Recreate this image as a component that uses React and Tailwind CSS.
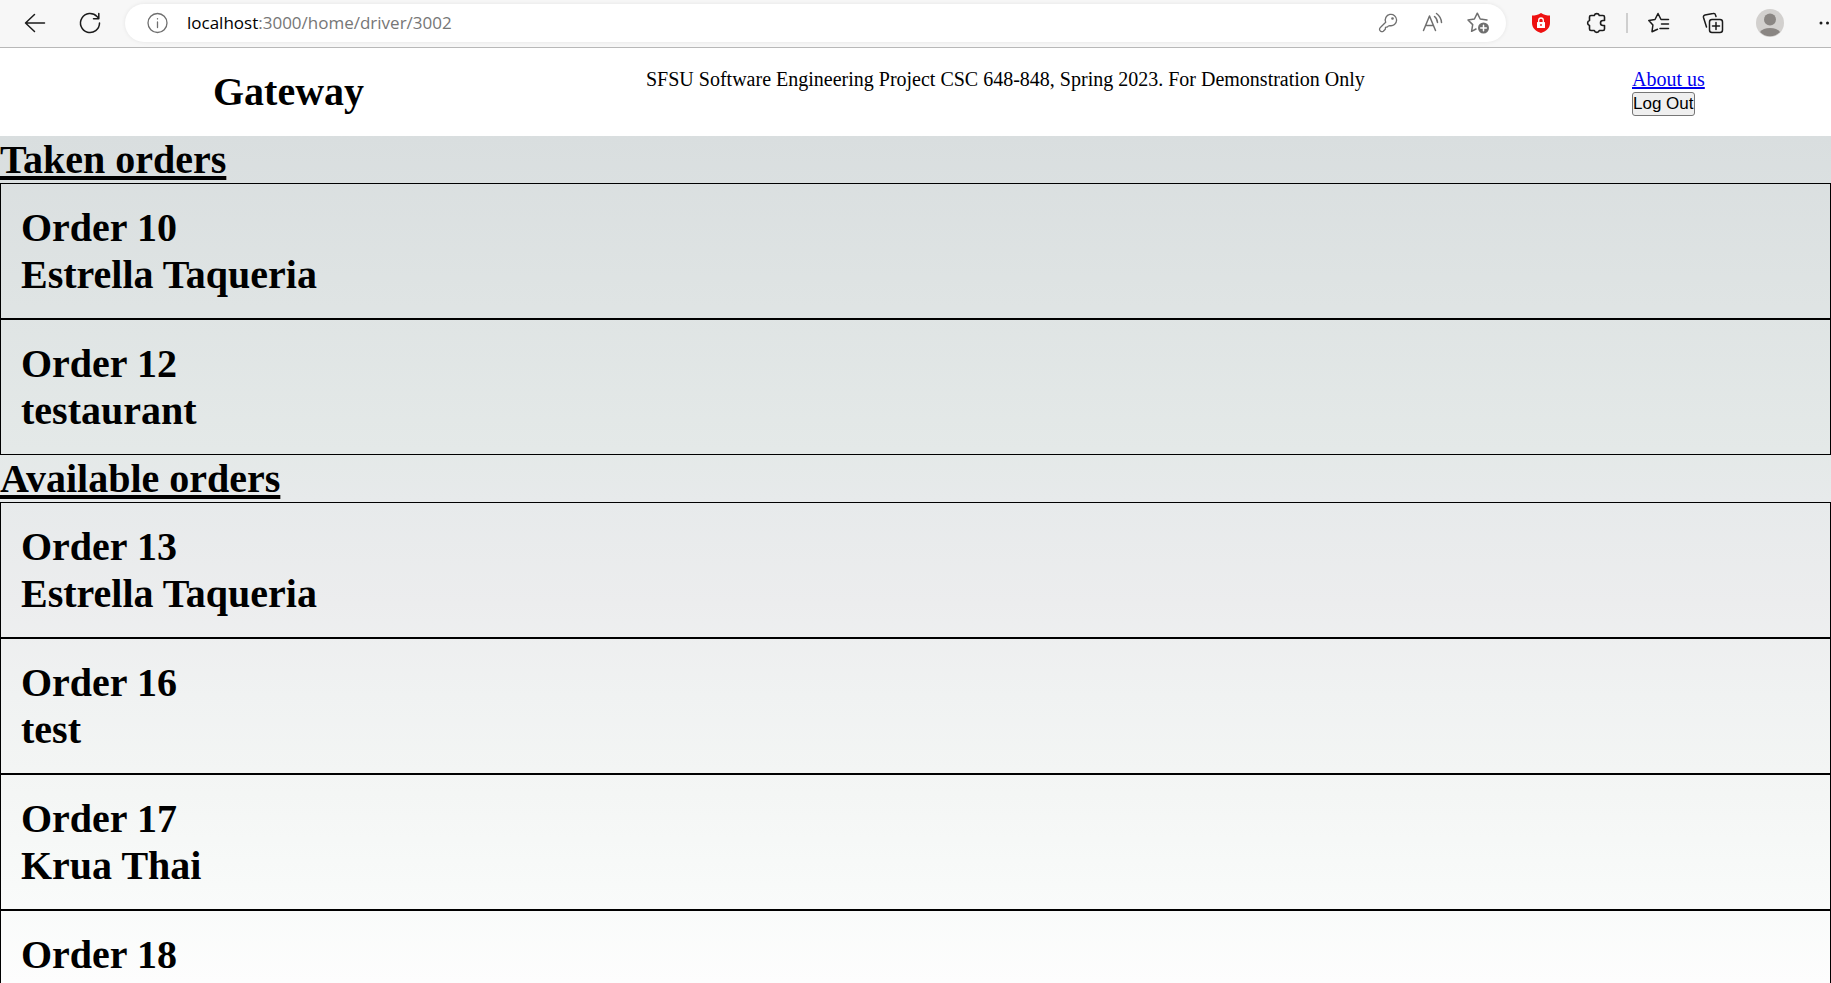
const taken = [
  { id: 10, restaurant: 'Estrella Taqueria' },
  { id: 12, restaurant: 'testaurant' },
];

const available = [
  { id: 13, restaurant: 'Estrella Taqueria' },
  { id: 16, restaurant: 'test' },
  { id: 17, restaurant: 'Krua Thai' },
  { id: 18 },
];

function Icon({ children, weight = 1.3 }) {
  return (
    <svg
      viewBox="0 0 24 24"
      className="size-6 fill-none stroke-current"
      strokeWidth={weight}
      strokeLinecap="round"
      strokeLinejoin="round"
      aria-hidden="true"
    >
      {children}
    </svg>
  );
}

function ToolButton({ label, children, className = '' }) {
  return (
    <button type="button" aria-label={label} className={`flex shrink-0 items-center justify-center ${className}`}>
      {children}
    </button>
  );
}

function BrowserBar() {
  return (
    <div className="flex h-12 shrink-0 items-center overflow-hidden border-b border-[#b8b8b8] bg-[#f7f7f7] pb-px pl-[23px] text-[#1b1b1b]">
      <ToolButton label="Back">
        <Icon weight={1.5}>
          <path d="M21.5 12H2.5M11.5 3.5 2.5 12l9 8.5" />
        </Icon>
      </ToolButton>
      <ToolButton label="Refresh" className="ml-[31px]">
        <Icon weight={1.5}>
          <path d="M21.5 12A9.5 9.5 0 1 1 19 5.6L20.800 7.500M20.800 2.500V7.700H15.500" />
        </Icon>
      </ToolButton>
      <div className="ml-[23px] flex h-[38px] min-w-0 flex-1 items-center rounded-full bg-white pr-4 pl-5 text-[#6f6f6f] shadow-[0_0_4px_rgba(0,0,0,0.08)]">
        <ToolButton label="Site information">
          <Icon>
            <circle cx="12.500" cy="12" r="9.500" />
            <path d="M12.500 11v5.500M12.500 7.600v.3" />
          </Icon>
        </ToolButton>
        <div className="ml-[18px] min-w-0 flex-1 truncate font-['Open_Sans',sans-serif] text-[17px] leading-6 text-[#767676]">
          <span className="text-black">localhost</span>:3000/home/driver/3002
        </div>
        <ToolButton label="Saved passwords">
          <Icon>
            <path d="M9.700 11.300A5.700 5.700 0 1 1 13.700 14.600C12.500 14.600 12 15 11.500 15.800L9.500 16.300 9.300 18.300 7.300 20.300C5.800 21.300 3.500 20.300 3.500 18.300C3.500 17.300 4 16.800 4.600 16.300Z" />
            <circle cx="16.500" cy="7.500" r="0.700" />
          </Icon>
        </ToolButton>
        <ToolButton label="Read aloud" className="ml-[21px]">
          <Icon weight={1.5}>
            <path d="M2.500 19.500 8.500 5 14.500 19.500M4.700 14.500h7.600M13.500 5.500a8 8 0 0 1 3 6M15.500 2.500a12 12 0 0 1 5 9" />
          </Icon>
        </ToolButton>
        <ToolButton label="Add to favorites" className="ml-[21px]">
          <Icon weight={1.5}>
            <path d="M10 18 5.600 20.300 6.700 13.600 2 9 8.400 8 11.300 2.200 14.200 8 21 9" />
            <circle cx="17.500" cy="17" r="5.500" className="fill-[#6f6f6f] stroke-none" />
            <path d="M17.500 14.200v5.600M14.700 17h5.600" className="stroke-white" />
          </Icon>
        </ToolButton>
      </div>
      <ToolButton label="Ad blocker" className="ml-[23px]">
        <Icon>
          <path d="M12 2C9 4 6 4.500 3 4.500V12c0 5 4 8.500 9 10 5-1.500 9-5 9-10V4.500C18 4.500 15 4 12 2Z" className="fill-[#ee1111] stroke-none" />
          <rect x="8" y="11" width="8" height="6" rx="0.500" className="fill-white stroke-none" />
          <path d="M9.700 11V9.300a2.300 2.300 0 0 1 4.600 0V11" className="stroke-white" />
          <circle cx="12" cy="14" r="0.900" className="fill-[#ee1111] stroke-none" />
        </Icon>
      </ToolButton>
      <ToolButton label="Extensions" className="ml-8">
        <Icon weight={1.6}>
          <path d="M6 4.500H9.300A2.600 2.600 0 0 1 14.300 4.500H18A1.500 1.500 0 0 1 19.500 6V9.500H18A2.500 2.500 0 0 0 18 14.500H19.500V18A1.500 1.500 0 0 1 18 19.500H14.300A2.600 2.600 0 0 1 9.300 19.500H6A1.500 1.500 0 0 1 4.500 18V14.500A2.600 2.600 0 0 1 4.500 9.500V6A1.500 1.500 0 0 1 6 4.500Z" />
        </Icon>
      </ToolButton>
      <span className="ml-[17px] h-5 w-0.5 shrink-0 bg-[#cfcfcf]" />
      <ToolButton label="Favorites" className="ml-[19px]">
        <Icon weight={1.5}>
          <path d="M10.500 18.200 5 20.700 5.900 14 1.800 9.500 8 8.500 11 2.500 14 8.500H21.500M14.500 13H21.500M13 17.500H21.500" />
        </Icon>
      </ToolButton>
      <ToolButton label="Collections" className="ml-[30px]">
        <Icon weight={1.5}>
          <rect x="8.500" y="8.500" width="13" height="13" rx="2.500" />
          <path d="M15 11.500v7M11.500 15h7M5.500 16 2.500 6.500A2 2 0 0 1 4 4L12 2.500A2 2 0 0 1 14.500 4L15 5.500" />
        </Icon>
      </ToolButton>
      <ToolButton label="Profile" className="ml-[31px]">
        <svg viewBox="0 0 28 28" className="size-7" aria-hidden="true">
          <circle cx="14" cy="14" r="14" className="fill-[#d2d0ce]" />
          <circle cx="14" cy="10.500" r="6" className="fill-[#8a8683]" />
          <path d="M4 23a11 7 0 0 1 20 0A14 14 0 0 1 4 23Z" className="fill-[#8a8683]" />
        </svg>
      </ToolButton>
      <ToolButton label="Settings and more" className="ml-[33px]">
        <svg viewBox="0 0 14 24" className="h-6 w-3.5 fill-current" aria-hidden="true">
          <circle cx="4" cy="12" r="1.500" />
          <circle cx="10.500" cy="12" r="1.500" />
        </svg>
      </ToolButton>
    </div>
  );
}

function OrderSection({ title, orders }) {
  return (
    <section>
      <h2 className="underline decoration-4 underline-offset-3">{title}</h2>
      <ul>
        {orders.map((order) => (
          <li key={order.id} className="border border-black p-5">
            <h3>Order {order.id}</h3>
            {order.restaurant && <h3>{order.restaurant}</h3>}
          </li>
        ))}
      </ul>
    </section>
  );
}

export default function App() {
  return (
    <div className="flex h-screen flex-col overflow-hidden bg-white font-['Liberation_Serif',serif] text-black">
      <BrowserBar />
      <header className="grid shrink-0 grid-cols-[433fr_986fr_199fr] py-5 pl-[213px] text-[20px] leading-[22px]">
        <h1 className="text-[40px] leading-12 font-bold">Gateway</h1>
        <p>SFSU Software Engineering Project CSC 648-848, Spring 2023. For Demonstration Only</p>
        <div className="flex flex-col items-start gap-0.5">
          <a href="#about" className="text-[#0000ee] underline decoration-2">About us</a>
          <button type="button" className="rounded-[3px] border border-[#767676] bg-[#efefef] font-['Liberation_Sans',sans-serif] text-[17px] leading-[22px]">
            Log Out
          </button>
        </div>
      </header>
      <main className="min-h-0 flex-1 overflow-hidden bg-[linear-gradient(to_bottom,#d9dedf_0%,#e4e9e8_37%,#e7eaeb_43%,#ecedee_55%,#f0f2f2_66%,#f3f5f4_75%,#f9fbfa_91%,#fdfdfd_100%)] text-[40px] leading-[47px] font-bold">
        <OrderSection title="Taken orders" orders={taken} />
        <OrderSection title="Available orders" orders={available} />
      </main>
    </div>
  );
}
